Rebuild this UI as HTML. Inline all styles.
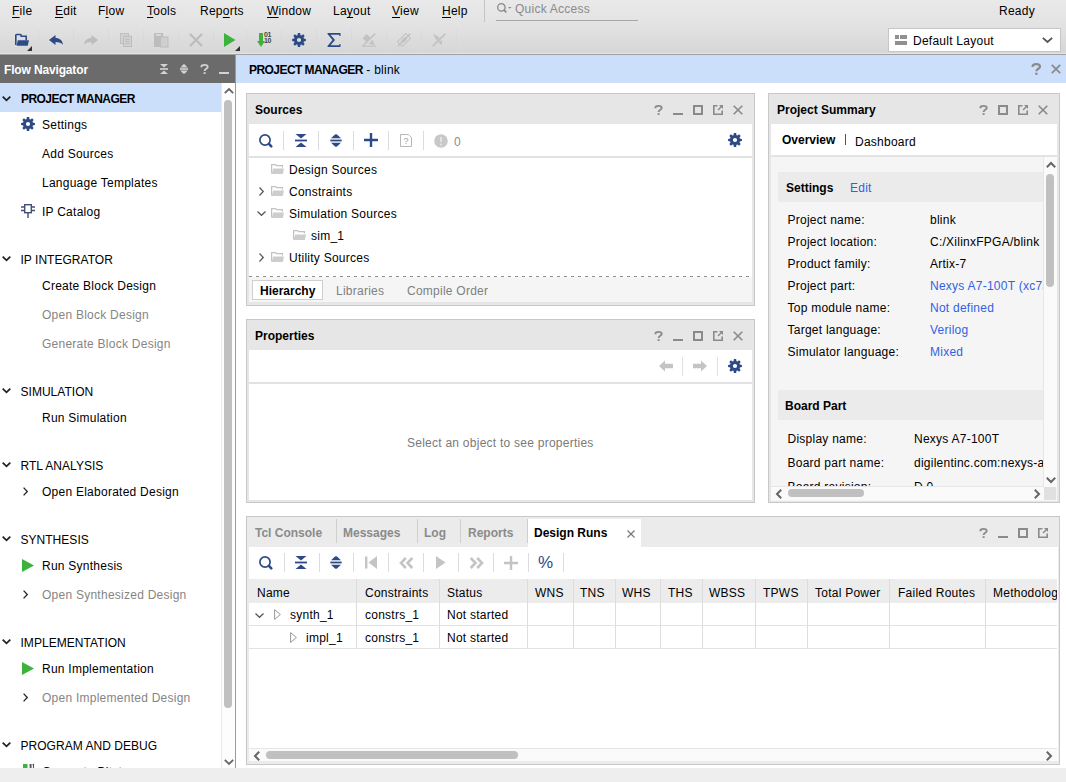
<!DOCTYPE html>
<html><head><meta charset="utf-8">
<style>
*{box-sizing:border-box;margin:0;padding:0}
html,body{width:1066px;height:782px;overflow:hidden;background:#fff;font-family:"Liberation Sans",sans-serif;font-size:12px;color:#000}
.a{position:absolute}
.t{position:absolute;white-space:nowrap;line-height:14px;letter-spacing:0.25px}
.b{font-weight:bold;letter-spacing:0px}
.g{color:#858585}
.lnk{color:#3162e6}
svg{position:absolute;overflow:visible}
</style></head><body>
<div class="a" style="left:0px;top:0px;width:1066px;height:54px;background:linear-gradient(#e9e9e9,#e3e3e3 45%,#d6d6d6);"></div><div class="a" style="left:0px;top:53px;width:1066px;height:1px;background:#e4e4e4;"></div><div class="a" style="left:0px;top:54px;width:1066px;height:1px;background:#a0a0a0;"></div><div class="t " style="left:12px;top:4px;"><span style="text-decoration:underline;text-underline-offset:2px">F</span>ile</div><div class="t " style="left:55px;top:4px;"><span style="text-decoration:underline;text-underline-offset:2px">E</span>dit</div><div class="t " style="left:98px;top:4px;">F<span style="text-decoration:underline;text-underline-offset:2px">l</span>ow</div><div class="t " style="left:147px;top:4px;"><span style="text-decoration:underline;text-underline-offset:2px">T</span>ools</div><div class="t " style="left:200px;top:4px;">Rep<span style="text-decoration:underline;text-underline-offset:2px">o</span>rts</div><div class="t " style="left:267px;top:4px;"><span style="text-decoration:underline;text-underline-offset:2px">W</span>indow</div><div class="t " style="left:333px;top:4px;">La<span style="text-decoration:underline;text-underline-offset:2px">y</span>out</div><div class="t " style="left:392px;top:4px;"><span style="text-decoration:underline;text-underline-offset:2px">V</span>iew</div><div class="t " style="left:442px;top:4px;"><span style="text-decoration:underline;text-underline-offset:2px">H</span>elp</div><div class="a" style="left:484px;top:0px;width:1px;height:22px;background:#c4c4c4;"></div><svg style="left:497px;top:3px" width="15" height="11" viewBox="0 0 15 11"><circle cx="4.4" cy="4.4" r="3.7" fill="none" stroke="#8a8a8a" stroke-width="1.3"/><path d="M7,7 L9.3,9.4" stroke="#8a8a8a" stroke-width="1.8"/><path d="M11,4 h3.6 l-1.8,1.8z" fill="#8a8a8a"/></svg><div class="t " style="left:515px;top:2px;color:#8a8a8a">Quick Access</div><div class="a" style="left:496px;top:20px;width:142px;height:1px;background:#a6a6a6;"></div><div class="t " style="left:999px;top:4px;">Ready</div><div class="a" style="left:38px;top:30px;width:1px;height:20px;background:#d9d9d9;"></div><div class="a" style="left:73px;top:30px;width:1px;height:20px;background:#d9d9d9;"></div><div class="a" style="left:108px;top:30px;width:1px;height:20px;background:#d9d9d9;"></div><div class="a" style="left:143px;top:30px;width:1px;height:20px;background:#d9d9d9;"></div><div class="a" style="left:178px;top:30px;width:1px;height:20px;background:#d9d9d9;"></div><div class="a" style="left:213px;top:30px;width:1px;height:20px;background:#d9d9d9;"></div><div class="a" style="left:246px;top:30px;width:1px;height:20px;background:#d9d9d9;"></div><div class="a" style="left:281px;top:30px;width:1px;height:20px;background:#d9d9d9;"></div><div class="a" style="left:316px;top:30px;width:1px;height:20px;background:#d9d9d9;"></div><div class="a" style="left:351px;top:30px;width:1px;height:20px;background:#d9d9d9;"></div><div class="a" style="left:386px;top:30px;width:1px;height:20px;background:#d9d9d9;"></div><div class="a" style="left:421px;top:30px;width:1px;height:20px;background:#d9d9d9;"></div><div class="a" style="left:456px;top:30px;width:1px;height:20px;background:#d9d9d9;"></div><svg style="left:15px;top:34px" width="14" height="12" viewBox="0 0 14 12"><path d="M0.8,11 V1.3 Q0.8,0.5 1.6,0.5 H5.4 Q6.2,0.5 6.2,1.3 V2.2 H11.2 V6.2" fill="none" stroke="#2d4a87" stroke-width="1.6"/><path d="M2.8,6.2 H14 L12.7,11.7 H1.6z" fill="#2d4a87"/></svg><svg style="left:27px;top:46px" width="5" height="5" viewBox="0 0 5 5"><path d="M5,0 V5 H0z" fill="#333"/></svg><svg style="left:49px;top:35px" width="14" height="10" viewBox="0 0 14 10"><path d="M0,5 L6.5,0 V3 C10.5,3 13.5,5 14,10 C12.5,7.8 10,7 6.5,7 V10z" fill="#2d4a87"/></svg><svg style="left:84px;top:35px" width="14" height="10" viewBox="0 0 14 10"><path d="M14,5 L7.5,0 V3 C3.5,3 .5,5 0,10 C1.5,7.8 4,7 7.5,7 V10z" fill="#bdbdbd"/></svg><svg style="left:120px;top:33px" width="12" height="14" viewBox="0 0 12 14"><rect x="0.5" y="0.5" width="8" height="10" fill="#d2d2d2" stroke="#c0c0c0" stroke-width="1"/><rect x="3.5" y="3.2" width="8" height="10.3" fill="#d2d2d2" stroke="#bcbcbc" stroke-width="1"/><path d="M5.2,6.2 h4.6 M5.2,8.4 h4.6 M5.2,10.6 h4.6" stroke="#bcbcbc" stroke-width="1"/></svg><svg style="left:154px;top:33px" width="14" height="14" viewBox="0 0 14 14"><rect x="0" y="0" width="9" height="14" fill="#bdbdbd"/><rect x="2" y="1.2" width="5" height="1.5" fill="#e2e2e2"/><rect x="6.5" y="4" width="7.5" height="10" fill="#cfcfcf" stroke="#bdbdbd" stroke-width="1"/></svg><svg style="left:189px;top:33px" width="14" height="14" viewBox="0 0 14 14"><path d="M1,1 L13,13 M13,1 L1,13" stroke="#bcbcbc" stroke-width="2.2"/></svg><svg style="left:224px;top:33px" width="12" height="14" viewBox="0 0 12 14"><path d="M0,0 L11.5,7 L0,14z" fill="#3db33d"/></svg><svg style="left:235px;top:46px" width="5" height="5" viewBox="0 0 5 5"><path d="M5,0 V5 H0z" fill="#333"/></svg><svg style="left:257px;top:33px" width="16" height="14" viewBox="0 0 16 14"><path d="M2,0 h4 v8 h2 L4,14 L0,8 h2z" fill="#3db33d"/></svg><div class="t" style="left:264px;top:32px;font-size:7px;line-height:6px;letter-spacing:-0.3px;color:#444;font-weight:bold">01<br>10</div><svg style="left:292px;top:33px" width="14" height="14" viewBox="0 0 14 14"><path fill="#2d4a87" fill-rule="evenodd" d="M11.87,5.49 L13.91,5.88 L13.91,8.12 L11.87,8.51 L11.51,9.38 L12.68,11.10 L11.10,12.68 L9.38,11.51 L8.51,11.87 L8.12,13.91 L5.88,13.91 L5.49,11.87 L4.62,11.51 L2.90,12.68 L1.32,11.10 L2.49,9.38 L2.13,8.51 L0.09,8.12 L0.09,5.88 L2.13,5.49 L2.49,4.62 L1.32,2.90 L2.90,1.32 L4.62,2.49 L5.49,2.13 L5.88,0.09 L8.12,0.09 L8.51,2.13 L9.38,2.49 L11.10,1.32 L12.68,2.90 L11.51,4.62Z M7,4.9 A2.1,2.1 0 1,0 7,9.1 A2.1,2.1 0 1,0 7,4.9Z"/></svg><svg style="left:327px;top:33px" width="14" height="14" viewBox="0 0 14 14"><path d="M0.5,0 H13.5 V3 H12.3 V1.8 H3.5 L8,7 L3.5,12.2 H12.3 V11 H13.5 V14 H0.5 V13 L5.5,7 L0.5,1z" fill="#2d4a87"/></svg><svg style="left:362px;top:33px" width="14" height="14" viewBox="0 0 14 14"><path d="M0,13.2 H14" stroke="#c2c2c2" stroke-width="1.2"/><path d="M0.8,12.8 L13.2,0.6" stroke="#c2c2c2" stroke-width="1.5"/><path d="M0.5,5.2 L4.6,1 L8.7,4.8 L4.4,9z M6.8,10.6 L10.6,6.8 L12.6,12.4z" fill="#c2c2c2"/></svg><svg style="left:397px;top:33px" width="14" height="14" viewBox="0 0 14 14"><path d="M0.8,13.2 L13.2,0.8" stroke="#c2c2c2" stroke-width="1.6"/><rect x="1.2" y="3.6" width="11.6" height="6.8" transform="rotate(-45 7 7)" fill="none" stroke="#c2c2c2" stroke-width="1"/><ellipse cx="7" cy="7" rx="3.6" ry="1.9" transform="rotate(-45 7 7)" fill="#c2c2c2"/></svg><svg style="left:432px;top:33px" width="14" height="14" viewBox="0 0 14 14"><path d="M0.8,13.2 L13.2,0.8" stroke="#c2c2c2" stroke-width="1.8"/><path d="M1,0.8 L7.6,4.6 L4.6,7.6z M6.2,8.8 L9.6,12.6 L10.2,7.2z" fill="#c2c2c2"/></svg><div class="a" style="left:888px;top:28px;width:173px;height:24px;background:#fff;border:1px solid #c6c6c6"></div><svg style="left:895px;top:35px" width="12" height="10" viewBox="0 0 12 10"><rect x="0" y="0" width="4" height="4" fill="#909090"/><rect x="5" y="0" width="7" height="4" fill="#909090"/><rect x="0" y="6" width="12" height="4" fill="#909090"/></svg><div class="t " style="left:913px;top:34px;">Default Layout</div><svg style="left:1042px;top:37px" width="11" height="6" viewBox="0 0 11 6"><path d="M0.8,0.8 L5.5,5 L10.2,0.8" fill="none" stroke="#555" stroke-width="1.8"/></svg><div class="a" style="left:0px;top:55px;width:235px;height:28px;background:#6b6b6b;"></div><div class="t b" style="left:4px;top:63px;color:#fff;letter-spacing:-0.15px">Flow Navigator</div><svg style="left:160px;top:64px" width="8" height="10" viewBox="0 0 8 10"><path d="M0,0 h8 L4,3.6z M0,10 h8 L4,6.4z" fill="#d2d2d2"/><rect x="0" y="4.2" width="8" height="1.6" fill="#d2d2d2"/></svg><svg style="left:180px;top:64px" width="8" height="10" viewBox="0 0 8 10"><path d="M0.3,3.6 Q2,1.6 3.2,0.4 Q4,-0.3 4.8,0.4 Q6,1.6 7.7,3.6z M0.3,6.4 Q2,8.4 3.2,9.6 Q4,10.3 4.8,9.6 Q6,8.4 7.7,6.4z" fill="#d2d2d2"/><rect x="0" y="4.2" width="8" height="1.6" fill="#d2d2d2"/></svg><svg style="left:200px;top:64px" width="9" height="10" viewBox="0 0 9 10"><path d="M1.3,3.2 C1.3,1.4 2.7,0.9 4.5,0.9 C6.4,0.9 7.7,1.7 7.7,3 C7.7,4.7 4.6,4.9 4.6,6.9" fill="none" stroke="#d2d2d2" stroke-width="1.9"/><rect x="3.6" y="8.2" width="2" height="1.8" fill="#d2d2d2"/></svg><div class="a" style="left:219px;top:72px;width:10px;height:2px;background:#d2d2d2;"></div><div class="a" style="left:235px;top:55px;width:1px;height:713px;background:#9a9a9a;"></div><div class="a" style="left:221px;top:83px;width:1px;height:685px;background:#e8e8e8;"></div><div class="a" style="left:222px;top:83px;width:13px;height:685px;background:#fdfdfd;"></div><svg style="left:224px;top:88px" width="10" height="6" viewBox="0 0 10 6"><path d="M0.8,5.2 L5,1 L9.2,5.2" fill="none" stroke="#666" stroke-width="1.8"/></svg><svg style="left:224px;top:759px" width="10" height="6" viewBox="0 0 10 6"><path d="M0.8,0.8 L5,5 L9.2,0.8" fill="none" stroke="#666" stroke-width="1.8"/></svg><div class="a" style="left:224px;top:100px;width:8px;height:608px;background:#c0c0c0;border-radius:4px"></div><div class="a" style="left:0px;top:83px;width:221px;height:29px;background:#cbdefa;"></div><svg style="left:2px;top:96px" width="9" height="5" viewBox="0 0 9 5"><path d="M0.7,0.7 L4.5,4.3 L8.3,0.7" fill="none" stroke="#222" stroke-width="1.8"/></svg><div class="t b" style="left:21px;top:92px;letter-spacing:-0.55px">PROJECT MANAGER</div><svg style="left:21px;top:117px" width="14" height="14" viewBox="0 0 14 14"><path fill="#2d4a87" fill-rule="evenodd" d="M11.87,5.49 L13.91,5.88 L13.91,8.12 L11.87,8.51 L11.51,9.38 L12.68,11.10 L11.10,12.68 L9.38,11.51 L8.51,11.87 L8.12,13.91 L5.88,13.91 L5.49,11.87 L4.62,11.51 L2.90,12.68 L1.32,11.10 L2.49,9.38 L2.13,8.51 L0.09,8.12 L0.09,5.88 L2.13,5.49 L2.49,4.62 L1.32,2.90 L2.90,1.32 L4.62,2.49 L5.49,2.13 L5.88,0.09 L8.12,0.09 L8.51,2.13 L9.38,2.49 L11.10,1.32 L12.68,2.90 L11.51,4.62Z M7,4.9 A2.1,2.1 0 1,0 7,9.1 A2.1,2.1 0 1,0 7,4.9Z"/></svg><div class="t " style="left:42px;top:118px;">Settings</div><div class="t " style="left:42px;top:147px;">Add Sources</div><div class="t " style="left:42px;top:176px;">Language Templates</div><svg style="left:21px;top:204px" width="14" height="14" viewBox="0 0 14 14"><rect x="3.7" y="0.7" width="6.6" height="8" fill="none" stroke="#3f5178" stroke-width="1.4"/><path d="M0,3 h3.7 M0,6.5 h3.7 M10.3,3 h3.7 M10.3,6.5 h3.7 M7,8.7 V14" stroke="#3f5178" stroke-width="1.4"/></svg><div class="t " style="left:42px;top:205px;">IP Catalog</div><svg style="left:2px;top:256px" width="9" height="5" viewBox="0 0 9 5"><path d="M0.7,0.7 L4.5,4.3 L8.3,0.7" fill="none" stroke="#222" stroke-width="1.8"/></svg><div class="t " style="left:20.5px;top:253px;letter-spacing:0.03px">IP INTEGRATOR</div><div class="t " style="left:42px;top:279px;">Create Block Design</div><div class="t g" style="left:42px;top:308px;">Open Block Design</div><div class="t g" style="left:42px;top:337px;">Generate Block Design</div><svg style="left:2px;top:388px" width="9" height="5" viewBox="0 0 9 5"><path d="M0.7,0.7 L4.5,4.3 L8.3,0.7" fill="none" stroke="#222" stroke-width="1.8"/></svg><div class="t " style="left:20.5px;top:385px;letter-spacing:0.03px">SIMULATION</div><div class="t " style="left:42px;top:411px;">Run Simulation</div><svg style="left:2px;top:462px" width="9" height="5" viewBox="0 0 9 5"><path d="M0.7,0.7 L4.5,4.3 L8.3,0.7" fill="none" stroke="#222" stroke-width="1.8"/></svg><div class="t " style="left:20.5px;top:459px;letter-spacing:0.03px">RTL ANALYSIS</div><svg style="left:23px;top:487px" width="5" height="9" viewBox="0 0 5 9"><path d="M0.6,0.6 L4.3,4.5 L0.6,8.4" fill="none" stroke="#222" stroke-width="1.3"/></svg><div class="t " style="left:42px;top:485px;">Open Elaborated Design</div><svg style="left:2px;top:536px" width="9" height="5" viewBox="0 0 9 5"><path d="M0.7,0.7 L4.5,4.3 L8.3,0.7" fill="none" stroke="#222" stroke-width="1.8"/></svg><div class="t " style="left:20.5px;top:533px;letter-spacing:0.03px">SYNTHESIS</div><svg style="left:22px;top:559px" width="12" height="13" viewBox="0 0 12 13"><path d="M0,0 L12,6.5 L0,13z" fill="#3db33d"/></svg><div class="t " style="left:42px;top:559px;">Run Synthesis</div><svg style="left:23px;top:590px" width="5" height="9" viewBox="0 0 5 9"><path d="M0.6,0.6 L4.3,4.5 L0.6,8.4" fill="none" stroke="#222" stroke-width="1.3"/></svg><div class="t g" style="left:42px;top:588px;">Open Synthesized Design</div><svg style="left:2px;top:639px" width="9" height="5" viewBox="0 0 9 5"><path d="M0.7,0.7 L4.5,4.3 L8.3,0.7" fill="none" stroke="#222" stroke-width="1.8"/></svg><div class="t " style="left:20.5px;top:636px;letter-spacing:0.03px">IMPLEMENTATION</div><svg style="left:22px;top:662px" width="12" height="13" viewBox="0 0 12 13"><path d="M0,0 L12,6.5 L0,13z" fill="#3db33d"/></svg><div class="t " style="left:42px;top:662px;">Run Implementation</div><svg style="left:23px;top:693px" width="5" height="9" viewBox="0 0 5 9"><path d="M0.6,0.6 L4.3,4.5 L0.6,8.4" fill="none" stroke="#222" stroke-width="1.3"/></svg><div class="t g" style="left:42px;top:691px;">Open Implemented Design</div><svg style="left:2px;top:742px" width="9" height="5" viewBox="0 0 9 5"><path d="M0.7,0.7 L4.5,4.3 L8.3,0.7" fill="none" stroke="#222" stroke-width="1.8"/></svg><div class="t " style="left:20.5px;top:739px;letter-spacing:0.03px">PROGRAM AND DEBUG</div><svg style="left:23px;top:764px" width="12" height="13" viewBox="0 0 12 13"><rect x="0" y="0" width="4.5" height="13" fill="#3db33d"/><path d="M6.5,0.5 h1.5 v4 M9.5,1 l1,-0.6 v4.2 M7.2,0.5 v4" stroke="#555" stroke-width="1.1" fill="none"/></svg><div class="t " style="left:42px;top:765px;">Generate Bitstream</div><div class="a" style="left:236px;top:55px;width:830px;height:28px;background:#cbdefa;"></div><div class="t " style="left:249px;top:63px;"><span class="b" style="letter-spacing:-0.55px">PROJECT MANAGER</span> - blink</div><svg style="left:1031px;top:63px" width="10.5" height="12" viewBox="0 0 9 10"><path d="M1.3,3.2 C1.3,1.4 2.7,0.9 4.5,0.9 C6.4,0.9 7.7,1.7 7.7,3 C7.7,4.7 4.6,4.9 4.6,6.9" fill="none" stroke="#8a8a8a" stroke-width="1.9"/><rect x="3.6" y="8.2" width="2" height="1.8" fill="#8a8a8a"/></svg><svg style="left:1051px;top:64px" width="10" height="10" viewBox="0 0 10 10"><path d="M0.8,0.8 L9.2,9.2 M9.2,0.8 L0.8,9.2" stroke="#8a8a8a" stroke-width="1.7"/></svg><div class="a" style="left:246px;top:93px;width:509px;height:213px;background:#e6e6e6;border:1px solid #c8c8c8"></div><div class="t b" style="left:255px;top:103px;">Sources</div><svg style="left:654px;top:105px" width="9" height="10" viewBox="0 0 9 10"><path d="M1.3,3.2 C1.3,1.4 2.7,0.9 4.5,0.9 C6.4,0.9 7.7,1.7 7.7,3 C7.7,4.7 4.6,4.9 4.6,6.9" fill="none" stroke="#8a8a8a" stroke-width="1.9"/><rect x="3.6" y="8.2" width="2" height="1.8" fill="#8a8a8a"/></svg><div class="a" style="left:673px;top:113px;width:10px;height:2px;background:#8a8a8a"></div><div class="a" style="left:693px;top:105px;width:10px;height:10px;border:2px solid #8a8a8a"></div><svg style="left:713px;top:105px" width="10" height="10" viewBox="0 0 10 10"><path d="M4.5,0.8 H0.8 V9.2 H9.2 V5.5" fill="none" stroke="#8a8a8a" stroke-width="1.6"/><path d="M5,5 L8.5,1.5" stroke="#8a8a8a" stroke-width="1.4"/><path d="M6,0 H10 V4z" fill="#8a8a8a"/></svg><svg style="left:733px;top:105px" width="10" height="10" viewBox="0 0 10 10"><path d="M0.7,0.7 L9.3,9.3 M9.3,0.7 L0.7,9.3" stroke="#8a8a8a" stroke-width="1.6"/></svg><div class="a" style="left:249px;top:124px;width:503px;height:153px;background:#fff;"></div><div class="a" style="left:249px;top:156px;width:503px;height:2px;background:#e2e2e2;"></div><div class="a" style="left:249px;top:277px;width:503px;height:25px;background:#f5f5f5;"></div><div class="a" style="left:249px;top:276px;width:500px;height:1px;background:repeating-linear-gradient(90deg,#8c8c8c 0 3px,transparent 3px 7px)"></div><svg style="left:259px;top:134px" width="14" height="14" viewBox="0 0 14 14"><circle cx="6" cy="6" r="5.1" fill="none" stroke="#2d4a87" stroke-width="1.7"/><path d="M10.2,10.2 L12.3,12.3" stroke="#2d4a87" stroke-width="2.6" stroke-linecap="round"/></svg><div class="a" style="left:283px;top:131px;width:1px;height:19px;background:#dcdcdc;"></div><svg style="left:295px;top:134px" width="12" height="13" viewBox="0 0 12 13"><path d="M0.5,0 h11 L6,4.4z M0.5,13 h11 L6,8.6z" fill="#2d4a87"/><rect x="0" y="5.6" width="12" height="1.8" fill="#2d4a87"/></svg><div class="a" style="left:318px;top:131px;width:1px;height:19px;background:#dcdcdc;"></div><svg style="left:330px;top:134px" width="12" height="13" viewBox="0 0 12 13"><path d="M1,4.3 L5,0.6 Q6,-0.3 7,0.6 L11,4.3z M1,8.7 L5,12.4 Q6,13.3 7,12.4 L11,8.7z" fill="#2d4a87"/><rect x="0.3" y="5.6" width="11.4" height="1.8" fill="#2d4a87"/></svg><div class="a" style="left:353px;top:131px;width:1px;height:19px;background:#dcdcdc;"></div><svg style="left:364px;top:133px" width="14" height="14" viewBox="0 0 14 14"><path d="M7,0 V14 M0,7 H14" stroke="#2d4a87" stroke-width="2.4"/></svg><div class="a" style="left:388px;top:131px;width:1px;height:19px;background:#dcdcdc;"></div><svg style="left:400px;top:134px" width="12" height="13" viewBox="0 0 12 13"><path d="M0.5,0.5 H8.5 L11.5,3.5 V12.5 H0.5z" fill="none" stroke="#b8b8b8" stroke-width="1"/><text x="6" y="10" font-size="9" text-anchor="middle" fill="#a0a0a0" font-family="Liberation Sans">?</text></svg><div class="a" style="left:423px;top:131px;width:1px;height:19px;background:#dcdcdc;"></div><svg style="left:434px;top:134px" width="14" height="14" viewBox="0 0 14 14"><circle cx="7" cy="7" r="6.8" fill="#c8c8c8"/><path d="M7,3 V8" stroke="#e6e6e6" stroke-width="1.8"/><circle cx="7" cy="10.5" r="1" fill="#e6e6e6"/></svg><div class="t " style="left:454px;top:135px;color:#8c8c8c">0</div><svg style="left:728px;top:133px" width="14" height="14" viewBox="0 0 14 14"><path fill="#2d4a87" fill-rule="evenodd" d="M11.87,5.49 L13.91,5.88 L13.91,8.12 L11.87,8.51 L11.51,9.38 L12.68,11.10 L11.10,12.68 L9.38,11.51 L8.51,11.87 L8.12,13.91 L5.88,13.91 L5.49,11.87 L4.62,11.51 L2.90,12.68 L1.32,11.10 L2.49,9.38 L2.13,8.51 L0.09,8.12 L0.09,5.88 L2.13,5.49 L2.49,4.62 L1.32,2.90 L2.90,1.32 L4.62,2.49 L5.49,2.13 L5.88,0.09 L8.12,0.09 L8.51,2.13 L9.38,2.49 L11.10,1.32 L12.68,2.90 L11.51,4.62Z M7,4.9 A2.1,2.1 0 1,0 7,9.1 A2.1,2.1 0 1,0 7,4.9Z"/></svg><svg style="left:271px;top:164px" width="13" height="10" viewBox="0 0 13 10"><path d="M0.6,9.5 V0.6 H4.6 L5.6,1.6 H11.4 V3.6" fill="none" stroke="#c2c2c2" stroke-width="1.2"/><path d="M2.2,4.4 H13 L11.8,10 H0.6z" fill="#cdcdcd"/></svg><div class="t " style="left:289px;top:163px;">Design Sources</div><svg style="left:259px;top:187px" width="5" height="9" viewBox="0 0 5 9"><path d="M0.5,0.5 L4.3,4.5 L0.5,8.5" fill="none" stroke="#555" stroke-width="1.2"/></svg><svg style="left:271px;top:186px" width="13" height="10" viewBox="0 0 13 10"><path d="M0.6,9.5 V0.6 H4.6 L5.6,1.6 H11.4 V3.6" fill="none" stroke="#c2c2c2" stroke-width="1.2"/><path d="M2.2,4.4 H13 L11.8,10 H0.6z" fill="#cdcdcd"/></svg><div class="t " style="left:289px;top:185px;">Constraints</div><svg style="left:257px;top:211px" width="9" height="5" viewBox="0 0 9 5"><path d="M0.5,0.5 L4.5,4.3 L8.5,0.5" fill="none" stroke="#555" stroke-width="1.2"/></svg><svg style="left:271px;top:208px" width="13" height="10" viewBox="0 0 13 10"><path d="M0.6,9.5 V0.6 H4.6 L5.6,1.6 H11.4 V3.6" fill="none" stroke="#c2c2c2" stroke-width="1.2"/><path d="M2.2,4.4 H13 L11.8,10 H0.6z" fill="#cdcdcd"/></svg><div class="t " style="left:289px;top:207px;">Simulation Sources</div><svg style="left:293px;top:230px" width="13" height="10" viewBox="0 0 13 10"><path d="M0.6,9.5 V0.6 H4.6 L5.6,1.6 H11.4 V3.6" fill="none" stroke="#c2c2c2" stroke-width="1.2"/><path d="M2.2,4.4 H13 L11.8,10 H0.6z" fill="#cdcdcd"/></svg><div class="t " style="left:311px;top:229px;">sim_1</div><svg style="left:259px;top:253px" width="5" height="9" viewBox="0 0 5 9"><path d="M0.5,0.5 L4.3,4.5 L0.5,8.5" fill="none" stroke="#555" stroke-width="1.2"/></svg><svg style="left:271px;top:252px" width="13" height="10" viewBox="0 0 13 10"><path d="M0.6,9.5 V0.6 H4.6 L5.6,1.6 H11.4 V3.6" fill="none" stroke="#c2c2c2" stroke-width="1.2"/><path d="M2.2,4.4 H13 L11.8,10 H0.6z" fill="#cdcdcd"/></svg><div class="t " style="left:289px;top:251px;">Utility Sources</div><div class="a" style="left:252px;top:280px;width:71px;height:20px;background:#fff;border:1px solid #cfcfcf"></div><div class="t b" style="left:260px;top:284px;">Hierarchy</div><div class="t " style="left:336px;top:284px;color:#808080">Libraries</div><div class="t " style="left:407px;top:284px;color:#808080">Compile Order</div><div class="a" style="left:246px;top:319px;width:509px;height:184px;background:#e6e6e6;border:1px solid #c8c8c8"></div><div class="t b" style="left:255px;top:329px;">Properties</div><svg style="left:654px;top:331px" width="9" height="10" viewBox="0 0 9 10"><path d="M1.3,3.2 C1.3,1.4 2.7,0.9 4.5,0.9 C6.4,0.9 7.7,1.7 7.7,3 C7.7,4.7 4.6,4.9 4.6,6.9" fill="none" stroke="#8a8a8a" stroke-width="1.9"/><rect x="3.6" y="8.2" width="2" height="1.8" fill="#8a8a8a"/></svg><div class="a" style="left:673px;top:339px;width:10px;height:2px;background:#8a8a8a"></div><div class="a" style="left:693px;top:331px;width:10px;height:10px;border:2px solid #8a8a8a"></div><svg style="left:713px;top:331px" width="10" height="10" viewBox="0 0 10 10"><path d="M4.5,0.8 H0.8 V9.2 H9.2 V5.5" fill="none" stroke="#8a8a8a" stroke-width="1.6"/><path d="M5,5 L8.5,1.5" stroke="#8a8a8a" stroke-width="1.4"/><path d="M6,0 H10 V4z" fill="#8a8a8a"/></svg><svg style="left:733px;top:331px" width="10" height="10" viewBox="0 0 10 10"><path d="M0.7,0.7 L9.3,9.3 M9.3,0.7 L0.7,9.3" stroke="#8a8a8a" stroke-width="1.6"/></svg><div class="a" style="left:249px;top:350px;width:503px;height:150px;background:#fff;"></div><div class="a" style="left:249px;top:382px;width:503px;height:2px;background:#e2e2e2;"></div><svg style="left:659px;top:360px" width="14" height="12" viewBox="0 0 14 12"><path d="M0,6 L6,0.5 V3.8 H14 V8.2 H6 V11.5z" fill="#c4c4c4"/></svg><div class="a" style="left:682px;top:357px;width:1px;height:19px;background:#e0e0e0;"></div><svg style="left:693px;top:360px" width="14" height="12" viewBox="0 0 14 12"><path d="M14,6 L8,0.5 V3.8 H0 V8.2 H8 V11.5z" fill="#c4c4c4"/></svg><div class="a" style="left:717px;top:357px;width:1px;height:19px;background:#e0e0e0;"></div><svg style="left:728px;top:359px" width="14" height="14" viewBox="0 0 14 14"><path fill="#2d4a87" fill-rule="evenodd" d="M11.87,5.49 L13.91,5.88 L13.91,8.12 L11.87,8.51 L11.51,9.38 L12.68,11.10 L11.10,12.68 L9.38,11.51 L8.51,11.87 L8.12,13.91 L5.88,13.91 L5.49,11.87 L4.62,11.51 L2.90,12.68 L1.32,11.10 L2.49,9.38 L2.13,8.51 L0.09,8.12 L0.09,5.88 L2.13,5.49 L2.49,4.62 L1.32,2.90 L2.90,1.32 L4.62,2.49 L5.49,2.13 L5.88,0.09 L8.12,0.09 L8.51,2.13 L9.38,2.49 L11.10,1.32 L12.68,2.90 L11.51,4.62Z M7,4.9 A2.1,2.1 0 1,0 7,9.1 A2.1,2.1 0 1,0 7,4.9Z"/></svg><div class="t " style="left:407px;top:436px;color:#7a7a7a">Select an object to see properties</div><div class="a" style="left:768px;top:93px;width:292px;height:410px;background:#e6e6e6;border:1px solid #c8c8c8"></div><div class="t b" style="left:777px;top:103px;">Project Summary</div><svg style="left:979px;top:105px" width="9" height="10" viewBox="0 0 9 10"><path d="M1.3,3.2 C1.3,1.4 2.7,0.9 4.5,0.9 C6.4,0.9 7.7,1.7 7.7,3 C7.7,4.7 4.6,4.9 4.6,6.9" fill="none" stroke="#8a8a8a" stroke-width="1.9"/><rect x="3.6" y="8.2" width="2" height="1.8" fill="#8a8a8a"/></svg><div class="a" style="left:998px;top:105px;width:10px;height:10px;border:2px solid #8a8a8a"></div><svg style="left:1018px;top:105px" width="10" height="10" viewBox="0 0 10 10"><path d="M4.5,0.8 H0.8 V9.2 H9.2 V5.5" fill="none" stroke="#8a8a8a" stroke-width="1.6"/><path d="M5,5 L8.5,1.5" stroke="#8a8a8a" stroke-width="1.4"/><path d="M6,0 H10 V4z" fill="#8a8a8a"/></svg><svg style="left:1038px;top:105px" width="10" height="10" viewBox="0 0 10 10"><path d="M0.7,0.7 L9.3,9.3 M9.3,0.7 L0.7,9.3" stroke="#8a8a8a" stroke-width="1.6"/></svg><div class="a" style="left:771px;top:124px;width:286px;height:31px;background:#fff;"></div><div class="a" style="left:771px;top:155px;width:286px;height:2px;background:#e4e4e4;"></div><div class="a" style="left:771px;top:157px;width:286px;height:344px;background:#f5f5f5;"></div><div class="t b" style="left:782px;top:133px;">Overview</div><div class="a" style="left:845px;top:134px;width:1px;height:11px;background:#555;"></div><div class="t " style="left:855px;top:135px;">Dashboard</div><div class="a" style="left:770px;top:156px;width:274px;height:331px;overflow:hidden"><div class="a" style="left:8px;top:16px;width:265px;height:30px;background:#ebebeb;"></div><div class="t b" style="left:16px;top:25px;">Settings</div><div class="t lnk" style="left:80px;top:25px;">Edit</div><div class="t " style="left:17.5px;top:57px;">Project name:</div><div class="t " style="left:160px;top:57px;">blink</div><div class="t " style="left:17.5px;top:79px;">Project location:</div><div class="t " style="left:160px;top:79px;">C:/XilinxFPGA/blink</div><div class="t " style="left:17.5px;top:101px;">Product family:</div><div class="t " style="left:160px;top:101px;">Artix-7</div><div class="t " style="left:17.5px;top:123px;">Project part:</div><div class="t lnk" style="left:160px;top:123px;">Nexys A7-100T (xc7a100tcsg324-1)</div><div class="t " style="left:17.5px;top:145px;">Top module name:</div><div class="t lnk" style="left:160px;top:145px;">Not defined</div><div class="t " style="left:17.5px;top:167px;">Target language:</div><div class="t lnk" style="left:160px;top:167px;">Verilog</div><div class="t " style="left:17.5px;top:189px;">Simulator language:</div><div class="t lnk" style="left:160px;top:189px;">Mixed</div><div class="a" style="left:8px;top:234px;width:265px;height:30px;background:#ebebeb;"></div><div class="t b" style="left:15px;top:243px;">Board Part</div><div class="t " style="left:17.5px;top:276px;">Display name:</div><div class="t " style="left:144px;top:276px;">Nexys A7-100T</div><div class="t " style="left:17.5px;top:300px;">Board part name:</div><div class="t " style="left:144px;top:300px;">digilentinc.com:nexys-a7-100t:1.0</div><div class="t " style="left:17.5px;top:324px;">Board revision:</div><div class="t " style="left:144px;top:324px;">D.0</div></div><div class="a" style="left:1043px;top:157px;width:1px;height:330px;background:#e6e6e6;"></div><div class="a" style="left:1044px;top:157px;width:13px;height:330px;background:#fafafa;"></div><svg style="left:1046px;top:162px" width="10" height="6" viewBox="0 0 10 6"><path d="M0.8,5.2 L5,1 L9.2,5.2" fill="none" stroke="#666" stroke-width="2"/></svg><div class="a" style="left:1046px;top:174px;width:8px;height:113px;background:#c0c0c0;border-radius:4px"></div><svg style="left:1046px;top:477px" width="10" height="6" viewBox="0 0 10 6"><path d="M0.8,0.8 L5,5 L9.2,0.8" fill="none" stroke="#666" stroke-width="2"/></svg><div class="a" style="left:771px;top:487px;width:273px;height:13px;background:#fafafa;"></div><div class="a" style="left:771px;top:486px;width:273px;height:1px;background:#e6e6e6;"></div><svg style="left:776px;top:489px" width="6" height="10" viewBox="0 0 6 10"><path d="M5.2,0.8 L1,5 L5.2,9.2" fill="none" stroke="#666" stroke-width="2"/></svg><div class="a" style="left:788px;top:489px;width:76px;height:8px;background:#c0c0c0;border-radius:4px"></div><svg style="left:1034px;top:489px" width="6" height="10" viewBox="0 0 6 10"><path d="M0.8,0.8 L5,5 L0.8,9.2" fill="none" stroke="#666" stroke-width="2"/></svg><div class="a" style="left:1044px;top:487px;width:12px;height:13px;background:#e0e0e0;"></div><div class="a" style="left:246px;top:516px;width:814px;height:249px;background:#ebebeb;border:1px solid #c8c8c8"></div><div class="a" style="left:249px;top:547px;width:809px;height:214px;background:#fff;"></div><div class="a" style="left:528px;top:519px;width:113px;height:28px;background:#fff;"></div><div class="a" style="left:527px;top:519px;width:1px;height:24px;background:#d0d0d0;"></div><div class="t b" style="left:255px;top:526px;color:#8a8a8a">Tcl Console</div><div class="t b" style="left:343px;top:526px;color:#8a8a8a">Messages</div><div class="t b" style="left:424px;top:526px;color:#8a8a8a">Log</div><div class="t b" style="left:468px;top:526px;color:#8a8a8a">Reports</div><div class="a" style="left:336px;top:519px;width:1px;height:24px;background:#d0d0d0;"></div><div class="a" style="left:417px;top:519px;width:1px;height:24px;background:#d0d0d0;"></div><div class="a" style="left:460px;top:519px;width:1px;height:24px;background:#d0d0d0;"></div><div class="t b" style="left:534px;top:526px;">Design Runs</div><svg style="left:627px;top:530px" width="8" height="8" viewBox="0 0 8 8"><path d="M0.5,0.5 L7.5,7.5 M7.5,0.5 L0.5,7.5" stroke="#777" stroke-width="1.2"/></svg><svg style="left:979px;top:528px" width="9" height="10" viewBox="0 0 9 10"><path d="M1.3,3.2 C1.3,1.4 2.7,0.9 4.5,0.9 C6.4,0.9 7.7,1.7 7.7,3 C7.7,4.7 4.6,4.9 4.6,6.9" fill="none" stroke="#8a8a8a" stroke-width="1.9"/><rect x="3.6" y="8.2" width="2" height="1.8" fill="#8a8a8a"/></svg><div class="a" style="left:998px;top:536px;width:10px;height:2px;background:#8a8a8a"></div><div class="a" style="left:1018px;top:528px;width:10px;height:10px;border:2px solid #8a8a8a"></div><svg style="left:1038px;top:528px" width="10" height="10" viewBox="0 0 10 10"><path d="M4.5,0.8 H0.8 V9.2 H9.2 V5.5" fill="none" stroke="#8a8a8a" stroke-width="1.6"/><path d="M5,5 L8.5,1.5" stroke="#8a8a8a" stroke-width="1.4"/><path d="M6,0 H10 V4z" fill="#8a8a8a"/></svg><svg style="left:259px;top:556px" width="14" height="14" viewBox="0 0 14 14"><circle cx="6" cy="6" r="5.1" fill="none" stroke="#2d4a87" stroke-width="1.7"/><path d="M10.2,10.2 L12.3,12.3" stroke="#2d4a87" stroke-width="2.6" stroke-linecap="round"/></svg><div class="a" style="left:284px;top:553px;width:1px;height:19px;background:#dcdcdc;"></div><svg style="left:295px;top:556px" width="12" height="13" viewBox="0 0 12 13"><path d="M0.5,0 h11 L6,4.4z M0.5,13 h11 L6,8.6z" fill="#2d4a87"/><rect x="0" y="5.6" width="12" height="1.8" fill="#2d4a87"/></svg><div class="a" style="left:319px;top:553px;width:1px;height:19px;background:#dcdcdc;"></div><svg style="left:330px;top:556px" width="12" height="13" viewBox="0 0 12 13"><path d="M1,4.3 L5,0.6 Q6,-0.3 7,0.6 L11,4.3z M1,8.7 L5,12.4 Q6,13.3 7,12.4 L11,8.7z" fill="#2d4a87"/><rect x="0.3" y="5.6" width="11.4" height="1.8" fill="#2d4a87"/></svg><div class="a" style="left:353px;top:553px;width:1px;height:19px;background:#dcdcdc;"></div><svg style="left:365px;top:556px" width="12" height="13" viewBox="0 0 12 13"><rect x="0" y="0.5" width="2.4" height="12" fill="#c4c4c4"/><path d="M12,0 V13 L3.5,6.5z" fill="#c4c4c4"/></svg><div class="a" style="left:388px;top:553px;width:1px;height:19px;background:#dcdcdc;"></div><svg style="left:399px;top:557px" width="15" height="12" viewBox="0 0 15 12"><path d="M6.8,1 L2,6 L6.8,11 M13.3,1 L8.5,6 L13.3,11" fill="none" stroke="#c4c4c4" stroke-width="2.6"/></svg><div class="a" style="left:423px;top:553px;width:1px;height:19px;background:#dcdcdc;"></div><svg style="left:436px;top:556px" width="10" height="13" viewBox="0 0 10 13"><path d="M0,0 V13 L9.5,6.5z" fill="#c4c4c4"/></svg><div class="a" style="left:458px;top:553px;width:1px;height:19px;background:#dcdcdc;"></div><svg style="left:469px;top:557px" width="15" height="12" viewBox="0 0 15 12"><path d="M1.7,1 L6.5,6 L1.7,11 M8.2,1 L13,6 L8.2,11" fill="none" stroke="#c4c4c4" stroke-width="2.6"/></svg><div class="a" style="left:493px;top:553px;width:1px;height:19px;background:#dcdcdc;"></div><svg style="left:504px;top:556px" width="14" height="14" viewBox="0 0 14 14"><path d="M7,0 V14 M0,7 H14" stroke="#c4c4c4" stroke-width="2.4"/></svg><div class="a" style="left:528px;top:553px;width:1px;height:19px;background:#dcdcdc;"></div><div class="t" style="left:538px;top:554px;font-size:17px;line-height:18px;color:#2d4a87;letter-spacing:0">%</div><div class="a" style="left:563px;top:553px;width:1px;height:19px;background:#dcdcdc;"></div><div class="a" style="left:249px;top:579px;width:808px;height:24px;background:#ececec;"></div><div class="a" style="left:356px;top:579px;width:1px;height:69px;background:#dddddd;"></div><div class="a" style="left:439px;top:579px;width:1px;height:69px;background:#dddddd;"></div><div class="a" style="left:527px;top:579px;width:1px;height:69px;background:#dddddd;"></div><div class="a" style="left:573px;top:579px;width:1px;height:69px;background:#dddddd;"></div><div class="a" style="left:615px;top:579px;width:1px;height:69px;background:#dddddd;"></div><div class="a" style="left:660px;top:579px;width:1px;height:69px;background:#dddddd;"></div><div class="a" style="left:702px;top:579px;width:1px;height:69px;background:#dddddd;"></div><div class="a" style="left:755px;top:579px;width:1px;height:69px;background:#dddddd;"></div><div class="a" style="left:807px;top:579px;width:1px;height:69px;background:#dddddd;"></div><div class="a" style="left:889px;top:579px;width:1px;height:69px;background:#dddddd;"></div><div class="a" style="left:985px;top:579px;width:1px;height:69px;background:#dddddd;"></div><div class="a" style="left:249px;top:625px;width:808px;height:1px;background:#e2e2e2;"></div><div class="a" style="left:249px;top:648px;width:808px;height:1px;background:#e2e2e2;"></div><div class="a" style="left:249px;top:581px;width:808px;height:70px;overflow:hidden"><div class="t " style="left:8px;top:5px;">Name</div><div class="t " style="left:116px;top:5px;">Constraints</div><div class="t " style="left:198px;top:5px;">Status</div><div class="t " style="left:286px;top:5px;">WNS</div><div class="t " style="left:331px;top:5px;">TNS</div><div class="t " style="left:373px;top:5px;">WHS</div><div class="t " style="left:419px;top:5px;">THS</div><div class="t " style="left:460px;top:5px;">WBSS</div><div class="t " style="left:514px;top:5px;">TPWS</div><div class="t " style="left:566px;top:5px;">Total Power</div><div class="t " style="left:649px;top:5px;">Failed Routes</div><div class="t " style="left:744px;top:5px;">Methodology</div></div><svg style="left:255px;top:613px" width="9" height="5" viewBox="0 0 9 5"><path d="M0.5,0.5 L4.5,4.3 L8.5,0.5" fill="none" stroke="#555" stroke-width="1.2"/></svg><svg style="left:274px;top:609px" width="7" height="11" viewBox="0 0 7 11"><path d="M0.6,0.6 L6.4,5.5 L0.6,10.4z" fill="none" stroke="#999" stroke-width="1"/></svg><div class="t " style="left:290px;top:608px;">synth_1</div><div class="t " style="left:365px;top:608px;">constrs_1</div><div class="t " style="left:447px;top:608px;">Not started</div><svg style="left:290px;top:632px" width="7" height="11" viewBox="0 0 7 11"><path d="M0.6,0.6 L6.4,5.5 L0.6,10.4z" fill="none" stroke="#999" stroke-width="1"/></svg><div class="t " style="left:306px;top:631px;">impl_1</div><div class="t " style="left:365px;top:631px;">constrs_1</div><div class="t " style="left:447px;top:631px;">Not started</div><div class="a" style="left:249px;top:748px;width:808px;height:1px;background:#e6e6e6;"></div><div class="a" style="left:249px;top:749px;width:808px;height:12px;background:#fafafa;"></div><svg style="left:254px;top:751px" width="6" height="10" viewBox="0 0 6 10"><path d="M5.2,0.8 L1,5 L5.2,9.2" fill="none" stroke="#666" stroke-width="2"/></svg><div class="a" style="left:266px;top:751px;width:252px;height:8px;background:#c0c0c0;border-radius:4px"></div><svg style="left:1046px;top:751px" width="6" height="10" viewBox="0 0 6 10"><path d="M0.8,0.8 L5,5 L0.8,9.2" fill="none" stroke="#666" stroke-width="2"/></svg><div class="a" style="left:0px;top:768px;width:1066px;height:14px;background:#eeeeee;"></div></body></html>
